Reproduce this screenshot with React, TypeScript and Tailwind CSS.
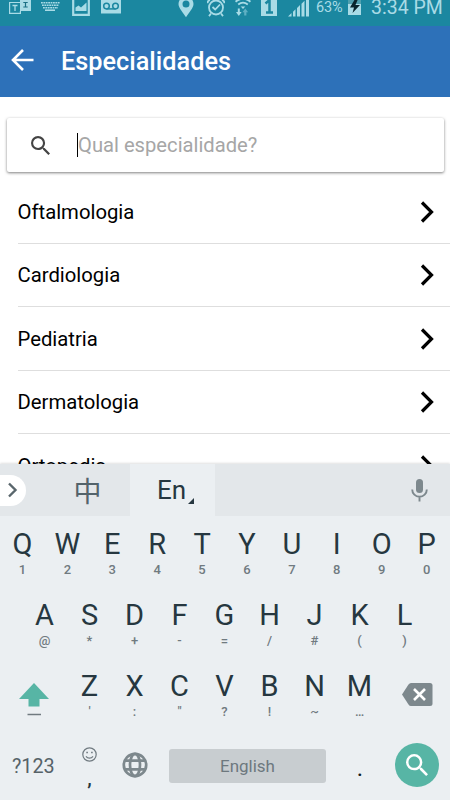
import React from 'react';

const specialties = ['Oftalmologia', 'Cardiologia', 'Pediatria', 'Dermatologia', 'Ortopedia'];

const topRow = [['Q', '1'], ['W', '2'], ['E', '3'], ['R', '4'], ['T', '5'], ['Y', '6'], ['U', '7'], ['I', '8'], ['O', '9'], ['P', '0']];
const middleRow = [['A', '@'], ['S', '*'], ['D', '+'], ['F', '-'], ['G', '='], ['H', '/'], ['J', '#'], ['K', '('], ['L', ')']];
const bottomRow = [['Z', "'"], ['X', ':'], ['C', '"'], ['V', '?'], ['B', '!'], ['N', '~'], ['M', '…']];

function StatusBar() {
  return (
    <div className="flex h-[26px] shrink-0 items-start overflow-hidden bg-[#1b87a0] text-[#a9dbe6]">
      <svg className="ml-[9px] shrink-0" width="22" height="18" viewBox="0 0 22 18" fill="none">
        <path d="M11 2.5H.6v10.8h10.8V11" stroke="currentColor" strokeWidth="1.2" />
        <path d="M3.5 5.5h5M6 5.5v5.5" stroke="currentColor" strokeWidth="1.3" />
        <path d="M11 0h11v11H11z" fill="currentColor" />
        <path d="M14.3 2.5h4.4M16.5 2.5v4.5M14.3 7h4.4" stroke="#1b6f84" strokeWidth="1.2" />
      </svg>
      <svg className="ml-[10px] shrink-0" width="19" height="18" viewBox="0 0 19 18" fill="none" stroke="currentColor">
        <path d="M0 2.8h19M1 5.3h17M2 7.8h15" strokeWidth="1.6" strokeDasharray="1.8 .6" />
        <path d="M4 10.2h10" strokeWidth="1.6" />
      </svg>
      <svg className="ml-[12px] shrink-0" width="18" height="18" viewBox="0 0 18 18">
        <path d="M1.2 -4v18.8h15.6v-18.800" fill="none" stroke="currentColor" strokeWidth="2.2" />
        <path d="M3.5 11V7.500l3-2 2.500 2 5.500-5V11z" fill="currentColor" />
      </svg>
      <svg className="ml-[11px] shrink-0" width="20" height="18" viewBox="0 0 20 18">
        <path d="M0 0h20v13.5H0z" fill="currentColor" />
        <path d="M5.5 8.900h9" stroke="#1b87a0" strokeWidth="1.5" />
        <circle cx="5.5" cy="6.1" r="2.8" fill="none" stroke="#1b87a0" strokeWidth="1.5" />
        <circle cx="14.5" cy="6.1" r="2.8" fill="none" stroke="#1b87a0" strokeWidth="1.5" />
      </svg>
      <svg className="ml-[57px] shrink-0" width="16" height="18" viewBox="0 0 16 18">
        <path fillRule="evenodd" d="M8 17.3C5 12.5.5 8 .5 4A7.5 7.5 0 0 1 15.5 4C15.5 8 11 12.5 8 17.3zM8 .5a3.500 3.500 0 1 0 0 7 3.500 3.500 0 0 0 0-7z" fill="currentColor" />
      </svg>
      <svg className="ml-[13px] shrink-0" width="18" height="18" viewBox="0 0 18 18" fill="none" stroke="currentColor">
        <circle cx="9" cy="7.5" r="7" strokeWidth="1.8" />
        <path d="m5.5 7 2.7 2.5L13 4.5" strokeWidth="1.8" />
        <path d="M.5 3.2C.5 1.5 1.5.5 3 0M17.5 3.2c0-1.7-1-2.7-2.5-3.2M4 13.5l-2 2.6M14 13.5l2 2.6" strokeWidth="1.8" />
      </svg>
      <svg className="ml-[10px] shrink-0" width="16" height="18" viewBox="0 0 16 18" fill="none" stroke="currentColor">
        <path d="M.5 1.7c4.5-3.8 10.5-3.8 15 0M3.2 4.5c3-2.4 6.6-2.4 9.6 0" strokeWidth="1.8" />
        <path d="M5.7 6.5h4.6L8 9z" fill="currentColor" stroke="none" />
        <path d="M3.8 8.5v4.5" strokeWidth="2" />
        <path d="M1 12h5.6l-2.8 4z" fill="currentColor" stroke="none" />
        <path d="M7.500 12.300 10.300 8.500l2.800 3.800h-1.700V15.500H9.200v-3.200z" fill="#5fb0c3" stroke="none" />
      </svg>
      <svg className="ml-[10px] shrink-0" width="16" height="18" viewBox="0 0 16 18">
        <path d="M0 0h16v16H0z" fill="currentColor" />
        <path d="M4.5 3.5 8.5 0v12.5M5 12.6h7" fill="none" stroke="#1b87a0" strokeWidth="2.5" />
      </svg>
      <svg className="ml-[11px] shrink-0" width="21" height="18" viewBox="0 0 21 18" fill="currentColor">
        <path d="M0 16.5 3.5 13v3.5zM5 11.8l2.5-2.5v7.2H5zM9 8l3-3v11.5H9zM13.5 3.7l3-3v15.8h-3zM18-1h3v17.5h-3z" />
      </svg>
      <span className="ml-[7px] w-[28px] shrink-0 whitespace-nowrap text-[14.5px] leading-[15px] tracking-[-0.1px]">63%</span>
      <svg className="ml-[4px] shrink-0" width="13" height="18" viewBox="0 0 13 18">
        <path d="M0 0h13v15H0z" fill="currentColor" />
        <path d="M0 0h13v4H0z" fill="#4f9fae" />
        <path d="M7-1 2 7.5h4L4.5 13 12 5H7.5L10-1z" fill="#08252d" />
      </svg>
      <span className="-mt-[4px] ml-[10px] shrink-0 whitespace-nowrap text-[19.5px] leading-[24px]">3:34 PM</span>
    </div>
  );
}

function Header() {
  return (
    <header className="flex h-[71px] shrink-0 items-center bg-[#2d71b9] text-white">
      <svg className="ml-[11px] -mt-[3px]" width="24" height="24" viewBox="0 0 24 24" fill="none" stroke="currentColor" strokeWidth="2.6">
        <path d="M22.500 12H2.5M12 2 2 12l10 10" />
      </svg>
      <h1 className="ml-[26px] pt-[1px] text-[25.3px] leading-[28px] font-medium">Especialidades</h1>
    </header>
  );
}

function SearchIcon({ size }: { size: number }) {
  return (
    <svg width={size} height={size} viewBox="3 3 17.49 17.49" fill="currentColor">
      <path d="M15.5 14h-.79l-.28-.27A6.471 6.471 0 0 0 16 9.5 6.5 6.5 0 1 0 9.5 16c1.61 0 3.09-.59 4.23-1.57l.27.28v.79l5 4.99L20.49 19l-4.99-5zm-6 0C7.01 14 5 11.99 5 9.5S7.01 5 9.5 5 14 7.01 14 9.5 11.99 14 9.5 14z" />
    </svg>
  );
}

function SearchBox() {
  return (
    <div className="mt-[21px] mr-[6px] ml-[7px] flex h-[54px] shrink-0 items-center rounded-[2px] bg-white text-[#444] shadow-[0_1px_3px_rgba(0,0,0,0.5)]">
      <div className="ml-[24px]"><SearchIcon size={19} /></div>
      <div className="ml-[27px] h-[24px] w-px bg-black" />
      <span className="text-[20.2px] leading-[24px] text-[#a6a6a6]">Qual especialidade?</span>
    </div>
  );
}

function SpecialtyRow({ name }: { name: string }) {
  return (
    <li className="ml-[18px] flex h-[63.5px] items-center justify-between border-b-[1.5px] border-[#dedede] pt-[1px] pr-[16px]">
      <span className="-ml-[0.5px] text-[20.3px] leading-[24px] text-black">{name}</span>
      <svg width="14" height="22" viewBox="0 0 14 22" fill="none" stroke="#000" strokeWidth="3.2">
        <path d="m2 1.5 9.5 9.5L2 20.5" />
      </svg>
    </li>
  );
}

function Key({ letter, hint }: { letter: string; hint: string }) {
  return (
    <div className="flex w-[45px] flex-col items-center">
      <span className="text-[29px] leading-[35px] text-[#263740]">{letter}</span>
      <span className="text-[13px] leading-[16px] font-medium text-[#707a80]">{hint}</span>
    </div>
  );
}

function Keyboard() {
  return (
    <div className="flex h-[336px] shrink-0 flex-col bg-[#ebeff2] shadow-[0_-1px_2px_rgba(0,0,0,0.12)]">
      <div className="flex h-[52px] shrink-0 items-center bg-[#e3e7ea]">
        <div className="flex h-[31px] w-[26px] items-center rounded-r-full bg-white">
          <svg className="ml-[7px]" width="11" height="16" viewBox="0 0 11 16" fill="none" stroke="#59666c" strokeWidth="2.4">
            <path d="m2 1.5 6.5 6.5L2 14.5" />
          </svg>
        </div>
        <span className="w-[104px] pl-[19px] text-center font-['Noto_Sans_CJK_SC',sans-serif] text-[28px] leading-[50px] text-[#53636b]">中</span>
        <div className="flex h-full w-[85px] items-center justify-center bg-[#ebeff2] pl-[6px]">
          <span className="text-[26px] leading-[30px] text-[#263740]">En</span>
          <svg className="mt-[21px] ml-[2px]" width="6" height="6" viewBox="0 0 6 6"><path d="M6 0v6H0z" fill="#263740" /></svg>
        </div>
        <svg className="mt-[1px] mr-[22px] ml-auto" width="17" height="23" viewBox="0 0 17 23" fill="none">
          <rect x="5" y="0" width="7" height="14" rx="3.5" fill="#7d888d" />
          <path d="M1.2 10.5a7.3 7.3 0 0 0 14.6 0M8.5 18v4.5" stroke="#7d888d" strokeWidth="1.9" />
        </svg>
      </div>

      <div className="flex h-[71px] shrink-0 justify-center pt-[11px] pr-[1px]">
        {topRow.map(([letter, hint]) => <Key key={letter} letter={letter} hint={hint} />)}
      </div>
      <div className="flex h-[71px] shrink-0 justify-center pt-[11px] pr-[1px]">
        {middleRow.map(([letter, hint]) => <Key key={letter} letter={letter} hint={hint} />)}
      </div>
      <div className="flex h-[71px] shrink-0 pt-[11px]">
        <div className="flex w-[67px] justify-center pt-[14px]">
          <svg width="30" height="34" viewBox="0 0 30 34">
            <path d="M15 0 30 16H20.5v7.5H9.5V16H0z" fill="#57b5a5" />
            <path d="M8.5 31.5h13.5" stroke="#707a80" strokeWidth="1.5" />
          </svg>
        </div>
        {bottomRow.map(([letter, hint]) => <Key key={letter} letter={letter} hint={hint} />)}
        <svg className="mt-[14px] ml-[20px]" width="31" height="23" viewBox="0 0 31 23">
          <path d="M9 0h19a2.5 2.5 0 0 1 2.5 2.5v18A2.5 2.5 0 0 1 28 23H9Q7.5 23 6.5 21.5L0 11.5 6.5 1.5Q7.5 0 9 0z" fill="#7d888d" />
          <path d="m12 6 11 11M23 6 12 17" stroke="#fff" strokeWidth="2.6" />
        </svg>
      </div>

      <div className="flex h-[71px] shrink-0 pt-[6px]">
        <span className="ml-[12px] w-[55px] pt-[20px] text-[19.8px] leading-[24px] text-[#566268]">?123</span>
        <div className="flex w-[45px] flex-col items-center">
          <svg className="mt-[12px]" width="15" height="15" viewBox="0 0 15 15" fill="none" stroke="#707a80">
            <circle cx="7.5" cy="7.5" r="6.7" strokeWidth="1.2" />
            <path d="M4 9.3c1.7 2.5 5.3 2.5 7 0" strokeWidth="1.2" />
            <path d="M4.3 5.5h1.6M9.1 5.5h1.6" strokeWidth="1.7" />
          </svg>
          <span className="mt-[4px] text-[20px] leading-[24px] font-medium text-[#263740]">,</span>
        </div>
        <svg className="mt-[17px] ml-[10px]" width="26" height="26" viewBox="0 0 26 26" fill="none" stroke="#7d888d" strokeWidth="2.7">
          <circle cx="13" cy="13" r="11.2" />
          <ellipse cx="13" cy="13" rx="5" ry="11.2" />
          <path d="M3 8.7h20M3 17.300h20" />
        </svg>
        <div className="mt-[14px] ml-[21px] flex h-[34px] w-[157px] items-center justify-center rounded-[3px] bg-[#c8cdd0] pt-[1px] text-[17px] text-[#6d787e]">English</div>
        <span className="ml-[23px] w-[22px] pt-[19px] text-center text-[24px] leading-[28px] text-[#111d22]">.</span>
        <div className="mt-[8px] ml-[24px] flex h-[44px] w-[44px] items-center justify-center rounded-full bg-[#57b5a5] text-white">
          <SearchIcon size={22} />
        </div>
      </div>
    </div>
  );
}

export default function App() {
  return (
    <div className="flex h-[800px] w-[450px] flex-col overflow-hidden bg-white font-[Roboto,sans-serif]">
      <StatusBar />
      <Header />
      <div className="flex min-h-0 flex-1 flex-col overflow-hidden">
        <SearchBox />
        <ul className="mt-[8px]">
          {specialties.map((name) => <SpecialtyRow key={name} name={name} />)}
        </ul>
      </div>
      <Keyboard />
    </div>
  );
}
